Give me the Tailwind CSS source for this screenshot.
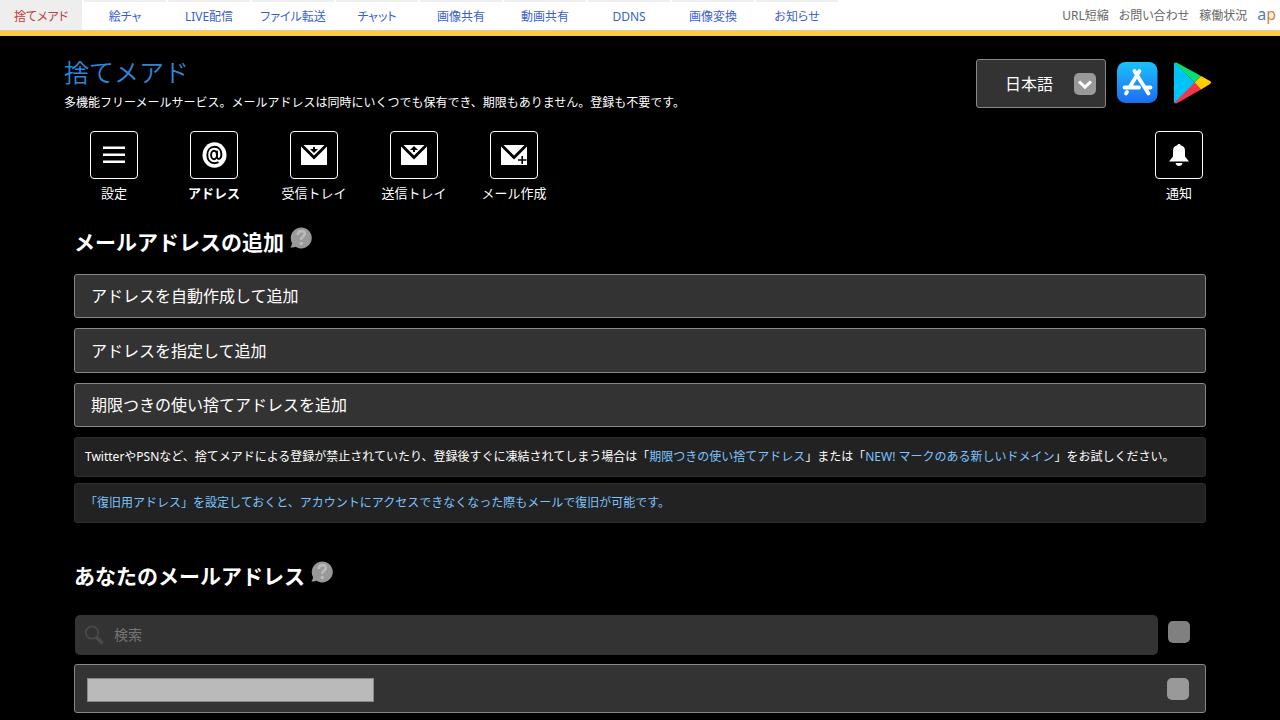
<!DOCTYPE html>
<html lang="ja">
<head>
<meta charset="utf-8">
<meta name="viewport" content="width=device-width, initial-scale=1">
<title>捨てメアド</title>
<script src="https://cdn.jsdelivr.net/npm/@tailwindcss/browser@4"></script>
</head>
<body class="min-h-screen bg-black text-white font-['Noto_Sans','Noto_Sans_CJK_JP',sans-serif]">
<nav class="flex h-9 justify-between border-b-[5px] border-[#fc3] bg-white text-xs text-[#3a5fcd]">
  <div class="flex grow justify-between border-b border-[#ccc]">
    <div class="flex gap-0.5 leading-[29px] text-center [font-feature-settings:'palt']">
      <a href="#" class="w-[82px] border-t-2 border-[#eee] bg-[#eee] text-[#c04040]">捨てメアド</a>
      <a href="#" class="w-[82px] border-t-2 border-[#eee]">絵チャ</a>
      <a href="#" class="w-[82px] border-t-2 border-[#eee]">LIVE配信</a>
      <a href="#" class="w-[82px] border-t-2 border-[#eee]">ファイル転送</a>
      <a href="#" class="w-[82px] border-t-2 border-[#eee]">チャット</a>
      <a href="#" class="w-[82px] border-t-2 border-[#eee]">画像共有</a>
      <a href="#" class="w-[82px] border-t-2 border-[#eee]">動画共有</a>
      <a href="#" class="w-[82px] border-t-2 border-[#eee]">DDNS</a>
      <a href="#" class="w-[82px] border-t-2 border-[#eee]">画像変換</a>
      <a href="#" class="w-[82px] border-t-2 border-[#eee]">お知らせ</a>
    </div>
    <div class="flex gap-2.5 pr-1 leading-8 text-[#666] [font-feature-settings:'palt']">
      <a href="#">URL短縮</a>
      <a href="#">お問い合わせ</a>
      <a href="#">稼働状況</a>
      <a href="#" class="text-base leading-[28px] text-[#4a7cc0]">a<span class="text-[#e8793a]">p</span></a>
    </div>
  </div>
</nav>

<header class="flex justify-between px-16 pt-5">
  <div>
    <h1 class="text-[25px] leading-8 font-[350] text-[#2f86d6]"><a href="#">捨てメアド</a></h1>
    <p class="text-xs leading-[30px]">多機能フリーメールサービス。メールアドレスは同時にいくつでも保有でき、期限もありません。登録も不要です。</p>
  </div>
  <div class="flex items-start pt-[3px]">
    <div class="relative">
      <select aria-label="言語" class="h-[49px] w-[130px] appearance-none rounded-[3px] border border-[#888] bg-[#333] pl-7 text-base text-white">
        <option>日本語</option>
      </select>
      <svg class="pointer-events-none absolute top-3.5 right-2.5" width="22" height="22" viewBox="0 0 22 22" aria-hidden="true"><rect width="22" height="22" rx="5" fill="#999"/><path d="M5 8.500l6 5.700 6-5.700" fill="none" stroke="#fff" stroke-width="3"/></svg>
    </div>
    <a href="#" aria-label="App Store" class="mt-0.5 ml-[10px]">
      <svg width="42" height="43" viewBox="0 0 42 43"><defs><linearGradient id="store" x1="0" y1="0" x2="0" y2="1"><stop offset="0" stop-color="#1cc2fb"/><stop offset="1" stop-color="#1d6cf2"/></linearGradient></defs><rect x="1" y="1" width="40.500" height="41" rx="8.500" fill="url(#store)"/><g stroke="#fff" stroke-width="3.800" stroke-linecap="round" fill="none"><path d="M23.500 10L13.500 26.500M11 31l-1 1.500M18.500 10l2.500 4.300 11.500 18.200M8.500 26.500h14.500M30 26.500h4.500"/></g></svg>
    </a>
    <a href="#" aria-label="Google Play" class="mt-[3px] ml-4">
      <svg width="42" height="42" viewBox="0 0 42 42"><path d="M0 1.500Q0 .5 1 1L21 21 1 41Q0 41.500 0 40.500z" fill="#00c3fa"/><path d="M.5 1Q1.500 0 3 .8L27 14 20.500 20.500z" fill="#00e076"/><path d="M.5 40.800Q1.500 42 3 41.200L27 27.500 20.500 20.500z" fill="#f4364c"/><path d="M27 14l9 5q2 1.500 0 3l-9 5.500-6.500-7z" fill="#ffce00"/></svg>
    </a>
  </div>
</header>

<div class="flex justify-between px-16 pt-[13px] text-[13px] leading-7">
  <div class="flex text-center">
    <button class="flex w-[100px] flex-col items-center"><span class="flex size-12 items-center justify-center rounded-[4px] border border-white"><svg width="24" height="18" viewBox="0 0 24 18" fill="#fff"><path d="M1 .6h22V3H1zM1 7.600h22V10H1zM1 14.600h22V17H1z"/></svg></span>設定</button>
    <button class="flex w-[100px] flex-col items-center font-bold"><span class="flex size-12 items-center justify-center rounded-[4px] border border-white"><svg width="26" height="26" viewBox="0 0 26 26"><ellipse cx="13.500" cy="13" rx="12" ry="12.700" fill="#fff"/><g fill="none" stroke="#000" stroke-width="1.900"><ellipse cx="13" cy="13" rx="2.900" ry="4.200"/><path d="M16 8.800v6.200c0 3 4.400 2.700 4.400-2.700 0-4.700-2.900-7.500-6.900-7.500-4.300 0-7.200 3.200-7.200 8.200s2.900 8.200 7.200 8.200c1.600 0 2.800-.4 4-1"/></g></svg></span>アドレス</button>
    <button class="flex w-[100px] flex-col items-center"><span class="flex size-12 items-center justify-center rounded-[4px] border border-white"><svg width="26" height="20" viewBox="0 0 26 20"><path d="M0 1.500l13 13 13-13V20H0zM2.500 0h21L13 10.500z" fill="#fff"/><path d="M12 2h2v2h3l-4 4-4-4h3z" fill="#000"/></svg></span>受信トレイ</button>
    <button class="flex w-[100px] flex-col items-center"><span class="flex size-12 items-center justify-center rounded-[4px] border border-white"><svg width="26" height="20" viewBox="0 0 26 20"><path d="M0 1.500l13 13 13-13V20H0zM2.500 0h21L13 10.500z" fill="#fff"/><path d="M12 7h2V5h3l-4-4-4 4h3z" fill="#000"/></svg></span>送信トレイ</button>
    <button class="flex w-[100px] flex-col items-center"><span class="flex size-12 items-center justify-center rounded-[4px] border border-white"><svg width="26" height="20" viewBox="0 0 26 20"><path d="M0 1.500l13 13 13-13V20H0zM2.500 0h21L13 10.500z" fill="#fff"/><path d="M17 15h8.500M21.200 11v8" stroke="#000" stroke-width="1.600"/></svg></span>メール作成</button>
  </div>
  <button class="flex w-[74px] flex-col items-center"><span class="flex size-12 items-center justify-center rounded-[4px] border border-white"><svg width="20" height="22" viewBox="0 0 20 22" fill="#fff"><path d="M10 0c1 0 1.500.6 1.700 1.300 2.600.6 4.300 2.400 4.300 5.200v6L20 17.500H0L4 12.500v-6c0-2.800 1.700-4.600 4.300-5.200C8.500.6 9 0 10 0zM6.500 19h7c-.5 1.700-1.700 3-3.500 3s-3-1.300-3.500-3z"/></svg></span>通知</button>
</div>

<main class="px-[74px] pb-2">
  <section class="pt-[18px]">
    <h2 class="flex items-start gap-1.5 text-[21px] leading-[34px] font-bold">メールアドレスの追加
      <button aria-label="ヘルプ" class="mt-0.5"><svg width="22" height="22" viewBox="0 0 22 22"><path d="M11 .5a10.500 10.500 0 1 1-5.500 19.300C4 20.500 2 20.500.3 20.200 1.500 19 2 17.500 2 16A10.500 10.500 0 0 1 11 .5z" fill="#999"/><path d="M7.800 8c0-5 7-5 7-1.200 0 2.800-3.600 2.700-3.600 6" fill="none" stroke="#bbb" stroke-width="2.600"/><circle cx="11.200" cy="16.500" r="1.700" fill="#bbb"/></svg></button>
    </h2>
    <div class="mt-[15px] flex flex-col gap-2.5 text-base">
      <button class="h-11 rounded-[3px] border border-[#888] bg-[#333] px-4 text-left">アドレスを自動作成して追加</button>
      <button class="h-[45px] rounded-[3px] border border-[#888] bg-[#333] px-4 text-left">アドレスを指定して追加</button>
      <button class="h-11 rounded-[3px] border border-[#888] bg-[#333] px-4 text-left">期限つきの使い捨てアドレスを追加</button>
    </div>
    <div class="mt-2.5 flex flex-col gap-1.5 text-xs leading-[38px]">
      <p class="rounded-[3px] border border-[#2e2e2e] bg-[#222] px-2.5">TwitterやPSNなど、捨てメアドによる登録が禁止されていたり、登録後すぐに凍結されてしまう場合は「<a href="#" class="text-[#7cc4ff]">期限つきの使い捨てアドレス</a>」または「<a href="#" class="text-[#7cc4ff]">NEW! マークのある新しいドメイン</a>」をお試しください。</p>
      <p class="rounded-[3px] border border-[#2e2e2e] bg-[#222] px-2.5"><a href="#" class="text-[#7cc4ff]">「復旧用アドレス」を設定しておくと、アカウントにアクセスできなくなった際もメールで復旧が可能です。</a></p>
    </div>
  </section>

  <section class="pt-9">
    <h2 class="flex items-start gap-1.5 text-[21px] leading-[34px] font-bold">あなたのメールアドレス
      <button aria-label="ヘルプ" class="mt-0.5"><svg width="22" height="22" viewBox="0 0 22 22"><path d="M11 .5a10.500 10.500 0 1 1-5.500 19.300C4 20.500 2 20.500.3 20.200 1.500 19 2 17.500 2 16A10.500 10.500 0 0 1 11 .5z" fill="#999"/><path d="M7.800 8c0-5 7-5 7-1.200 0 2.800-3.600 2.700-3.600 6" fill="none" stroke="#bbb" stroke-width="2.600"/><circle cx="11.200" cy="16.500" r="1.700" fill="#bbb"/></svg></button>
    </h2>
    <div class="mt-[22px] flex items-start gap-2.5 pr-4 pl-px">
      <label class="flex h-10 grow items-center gap-2.5 rounded-[5px] bg-[#333] pl-2.5">
        <svg width="19" height="20" viewBox="0 0 19 20" fill="none" stroke="#4a4a4a" aria-hidden="true"><circle cx="7" cy="7.500" r="6.200" stroke-width="1.800"/><path d="M11 11.800l6.500 6.700" stroke-width="3.500"/></svg>
        <input type="text" aria-label="検索" placeholder="検索" class="grow bg-transparent text-sm text-white outline-none placeholder:text-[#757575]">
      </label>
      <input type="checkbox" aria-label="すべて選択" class="mt-1.5 size-[22px] appearance-none rounded-[5px] bg-[#808080]">
    </div>
    <div class="mt-[9px] flex h-[49px] items-start justify-between rounded-[3px] border border-[#888] bg-[#333] pt-[13px] pr-4 pl-3">
      <div class="h-6 w-[287px] border border-[#888] bg-[#bababa]"></div>
      <input type="checkbox" aria-label="アドレスを選択" class="size-[22px] appearance-none rounded-[5px] bg-[#999]">
    </div>
  </section>
</main>
</body>
</html>
